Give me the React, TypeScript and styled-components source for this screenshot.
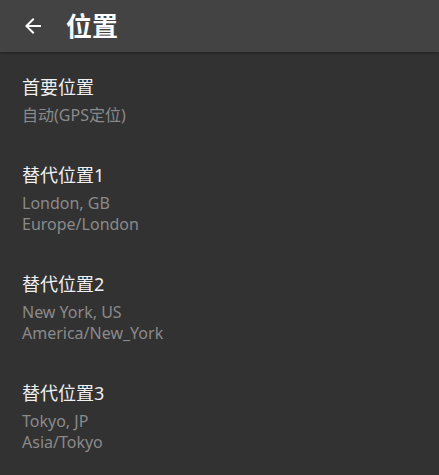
import styled, { createGlobalStyle } from 'styled-components'

const GlobalStyle = createGlobalStyle`
  html, body {
    margin: 0;
    padding: 0;
    background: #323232;
  }
  body {
    font-family: 'Noto Sans', 'Noto Sans CJK SC', sans-serif;
  }
`

const Page = styled.div`
  width: 100%;
  min-height: 475px;
  background: #323232;
  color: #f2f2f2;
`

const TopBar = styled.header`
  height: 52px;
  display: flex;
  align-items: center;
  padding-left: 21px;
  background: #434343;
  box-shadow: 0 1px 3px rgba(0, 0, 0, 0.35);
  position: relative;
  z-index: 1;
`

const BackButton = styled.button`
  display: flex;
  align-items: center;
  justify-content: center;
  width: 24px;
  height: 24px;
  padding: 0;
  border: 0;
  background: none;
  color: #ffffff;
  cursor: pointer;
`

const Title = styled.h1`
  margin: 0 0 0 21px;
  font-size: 26px;
  font-weight: 700;
  line-height: 52px;
  color: #ffffff;
`

const List = styled.div`
  padding-top: 5px;
`

const Row = styled.div`
  padding: 18px 22px 19px;
`

const RowTitle = styled.div`
  font-size: 18px;
  line-height: 24px;
  font-weight: 400;
  color: #f0f0f0;
  margin-bottom: 6px;
`

const RowLine = styled.div`
  font-size: 16px;
  line-height: 21px;
  color: #8a8a8a;
`

const locations = [
  { title: '首要位置', lines: ['自动(GPS定位)'] },
  { title: '替代位置1', lines: ['London, GB', 'Europe/London'] },
  { title: '替代位置2', lines: ['New York, US', 'America/New_York'] },
  { title: '替代位置3', lines: ['Tokyo, JP', 'Asia/Tokyo'] },
]

function App() {
  return (
    <Page>
      <GlobalStyle />
      <TopBar>
        <BackButton aria-label='返回'>
          <svg width='24' height='24' viewBox='0 0 24 24' fill='currentColor'>
            <path d='M20 11H7.83l5.59-5.59L12 4l-8 8 8 8 1.41-1.41L7.83 13H20v-2z' />
          </svg>
        </BackButton>
        <Title>位置</Title>
      </TopBar>
      <List>
        {locations.map((loc) => (
          <Row key={loc.title}>
            <RowTitle>{loc.title}</RowTitle>
            {loc.lines.map((line) => (
              <RowLine key={line}>{line}</RowLine>
            ))}
          </Row>
        ))}
      </List>
    </Page>
  )
}

export default App
